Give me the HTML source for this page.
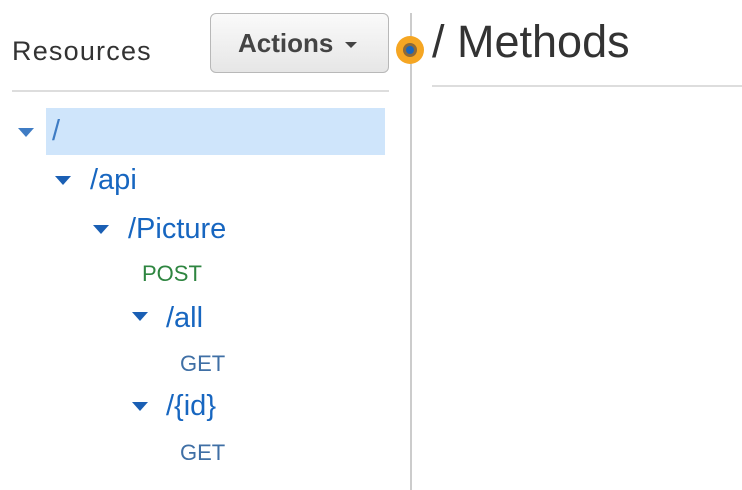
<!DOCTYPE html>
<html><head><style>
body{margin:0;width:742px;height:490px;background:#fff;position:relative;overflow:hidden;font-family:"Liberation Sans",Arial,sans-serif}
.a{position:absolute;white-space:nowrap}
.t{position:absolute;width:0;height:0;border-left:8px solid transparent;border-right:8px solid transparent;border-top:9px solid #1a5fb4}
.n{color:#1766c0;font-size:29px}
.m{font-size:22px}
</style></head><body>
<div class="a" style="left:12px;top:36px;font-size:27px;letter-spacing:1.2px;color:#333">Resources</div>
<div class="a" style="left:210px;top:13px;width:177px;height:58px;border:1px solid #b8b8b8;border-radius:6px;background:linear-gradient(#fafafa,#e6e6e6);"></div>
<div class="a" style="left:238px;top:28px;font-size:26px;font-weight:bold;color:#444">Actions</div>
<div class="a" style="left:345px;top:42px;width:0;height:0;border-left:6px solid transparent;border-right:6px solid transparent;border-top:6px solid #444"></div>
<div class="a" style="left:12px;top:90px;width:377px;height:2px;background:#ddd"></div>
<div class="a" style="left:410px;top:13px;width:2px;height:477px;background:#ccc"></div>
<div class="a" style="left:396px;top:36px;width:28px;height:28px;border-radius:50%;background:#f5a623"></div>
<div class="a" style="left:403px;top:43px;width:14px;height:14px;border-radius:50%;background:#8c6a3a"></div>
<div class="a" style="left:406px;top:46px;width:8px;height:8px;border-radius:50%;background:#1766c0"></div>
<div class="a" style="left:432px;top:16px;font-size:45px;color:#333">/ Methods</div>
<div class="a" style="left:432px;top:85px;width:310px;height:2px;background:#ddd"></div>
<div class="a" style="left:46px;top:108px;width:339px;height:47px;background:#cfe5fb"></div>
<div class="t" style="left:18px;top:128px;border-top-color:#3f7cc4"></div>
<div class="a n" style="left:52px;top:115px;color:#3f7cc4">/</div>
<div class="t" style="left:55px;top:176px"></div>
<div class="a n" style="left:90px;top:164px">/api</div>
<div class="t" style="left:93px;top:225px"></div>
<div class="a n" style="left:128px;top:213px">/Picture</div>
<div class="a m" style="left:142px;top:261px;color:#2e8540">POST</div>
<div class="t" style="left:132px;top:312px"></div>
<div class="a n" style="left:166px;top:302px">/all</div>
<div class="a m" style="left:180px;top:351px;color:#3f6fa5">GET</div>
<div class="t" style="left:132px;top:402px"></div>
<div class="a n" style="left:166px;top:390px">/{id}</div>
<div class="a m" style="left:180px;top:440px;color:#3f6fa5">GET</div>
</body></html>
